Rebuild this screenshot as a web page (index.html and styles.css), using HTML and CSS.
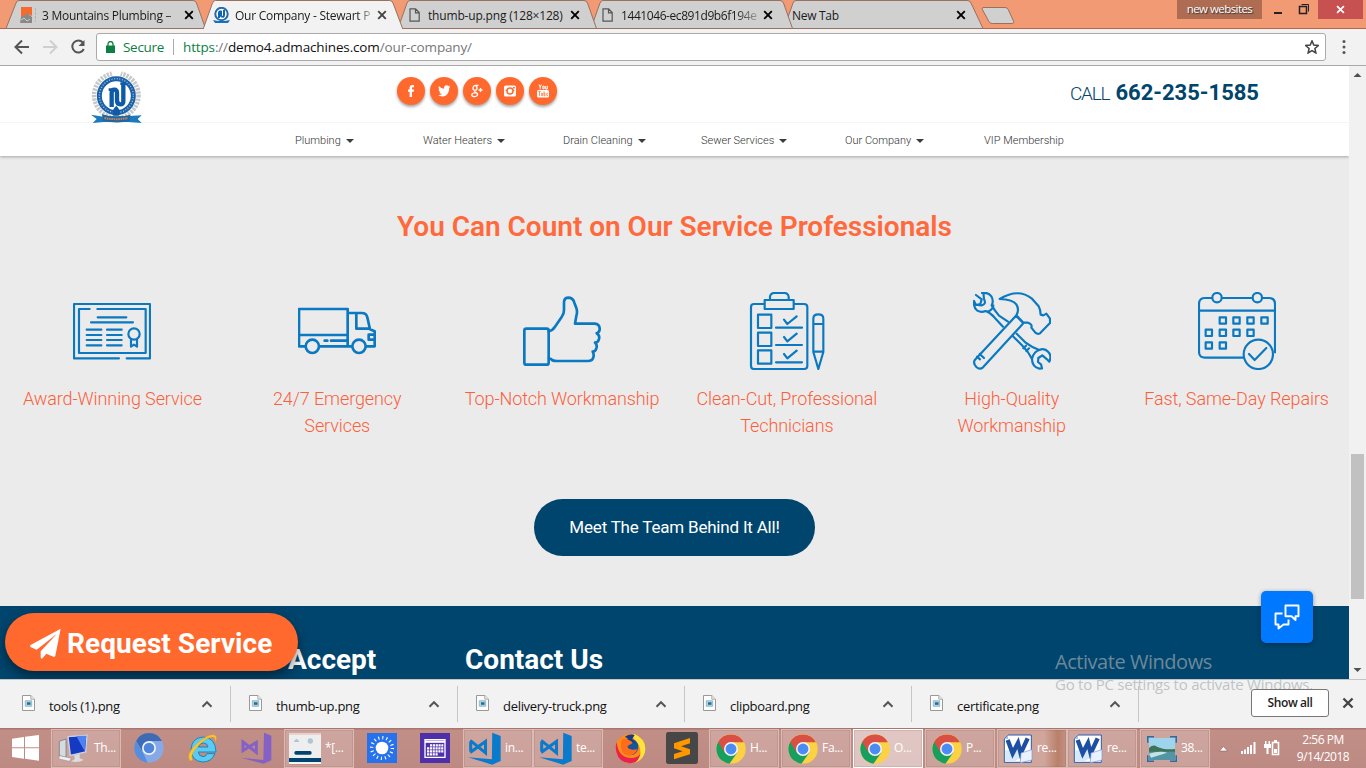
FILE: index.html
```html
<!DOCTYPE html>
<html lang="en">
<head>
<meta charset="utf-8">
<title>Our Company - Stewart Plumbing</title>
<link rel="stylesheet" href="styles.css">
</head>
<body>
<svg class="defs" width="0" height="0">
  <defs>
    <symbol id="x" viewBox="0 0 10 10"><path d="M1.2 1.2 8.8 8.8M8.8 1.2 1.2 8.8" fill="none" stroke="currentColor" stroke-width="1.9"/></symbol>
    <symbol id="page" viewBox="0 0 11 14"><path d="M1 .8h5.6L10.200 4.500v8.700H1zM6.500 .8v4h3.700" fill="none" stroke="#555" stroke-width="1.200"/></symbol>
    <symbol id="file" viewBox="0 0 13 16"><path d="M.5.5h8.300l3.700 3.700v11.300H.5z" fill="#fdfdfd" stroke="#999"/><path d="M8.800.5v3.700h3.700" fill="#eee" stroke="#999" stroke-width=".8"/><path d="M3.300 5.700h6.400v5.600H3.300z" fill="#a9d4ea" stroke="#84aabb" stroke-width=".7"/><path d="M5 7.300h3.500v2.500H5z" fill="#276c8b"/></symbol>
    <symbol id="up" viewBox="0 0 12 8"><path d="M1.500 6.800 6 2.200l4.500 4.600" fill="none" stroke="#555" stroke-width="2"/></symbol>
    <symbol id="chrome" viewBox="0 0 48 48"><circle cx="24" cy="24" r="23.500" fill="#fdd144"/><path d="M24 24 3.600 12.300A23.500 23.500 0 0 0 21.500 47.400L34.200 29.500z" fill="#17a05d"/><path d="M3.600 12.300A23.500 23.500 0 0 1 44.600 13H24L13.800 30z" fill="#d94f43"/><circle cx="24" cy="24" r="11.200" fill="#f4f4f4"/><circle cx="24" cy="24" r="8.700" fill="#4b8bf4"/></symbol>
    <symbol id="vscode" viewBox="0 0 98 98"><path d="M72 2 97 12v74L72 97 0 75l71 6z" fill="#0a7acc"/><path d="m10 28 42 34V28L10 58 8 55V31z" fill="none" stroke="#0a7acc" stroke-width="9"/></symbol>
    <symbol id="word" viewBox="0 0 90 90"><path d="M15 3h70v82H4V15z" fill="#fff" stroke="#2c5cae" stroke-width="3"/><path d="M4 15 15 3v12z" fill="#9ec3ec"/><path d="M7 49h50v20L30 84H7z" fill="#d6e8fa"/><path d="m14 18 15 40 16-31 8 31 21-45" fill="none" stroke="#1d4fa2" stroke-width="13"/><path d="m54 57 33-10v31l-35 8z" fill="#eaf2ff" stroke="#7599d6" stroke-width="2"/></symbol>
  </defs>
</svg>

<div class="screen">
  <header class="tabstrip">
    <svg class="tabshapes" width="1366" height="29" viewBox="0 0 1366 29">
      <rect width="1366" height="29" fill="#f19a74"/>
      <path d="M0 28.500h1366" stroke="#b3664b"/>
      <g fill="#d0d0d0" stroke="#98715f">
        <path d="M784 28.500 793 3q1-2.500 3-2.500h171q3 0 4 2.500l12 25.500z"/>
        <path d="M591 28.500 600 3q1-2.500 3-2.500h177q2.500 0 3.500 2.500l9 25.500z"/>
        <path d="M398 28.500 407 3q1-2.500 3-2.500h174q2.500 0 3.500 2.500l9 25.500z"/>
        <path d="M6 28.500 16 3q1-2.500 3-2.500h174q2.500 0 3.500 2.500l9 25.500z"/>
        <path d="M983 7.500h22q2.500 0 3.200 2l5.500 12q.8 2-1.500 2h-20q-2.500 0-3.300-2l-6.500-12q-.6-2 .6-2z"/>
      </g>
      <path d="M203 29.500 212.500 3q1-2.500 3-2.500h174q2.500 0 3.500 2.500L403 29.500z" fill="#f2f2f2" stroke="#98715f"/>
    </svg>
    <div class="tabs">
      <div class="tab">
        <svg width="16" height="16" viewBox="0 0 16 16"><path d="M1 0h11v9L8 7 1 11z" fill="#f8692c"/><path d="m0 16 1-6 4-2 2-2 5 4v6z" fill="#888"/><path d="m1 13 3-2 3 3 3-2" fill="none" stroke="#ccc"/><path d="M15.500 1v14" stroke="#b5b5b5" stroke-dasharray="3 1"/></svg>
        <span class="tabname">3 Mountains Plumbing –</span><svg class="tx" width="10" height="10"><use href="#x"/></svg>
      </div>
      <div class="tab active">
        <svg width="17" height="17" viewBox="0 0 17 17"><circle cx="8.500" cy="7" r="6.200" fill="#fff" stroke="#2369ad" stroke-width="2"/><path d="M6 11V6q0-2 2-1.500V9q3 2 3-1V3" fill="none" stroke="#1265ad" stroke-width="2"/><path d="m0 13 5 1h7l5-1-2 3H2z" fill="#1773b9"/></svg>
        <span class="tabname">Our Company - Stewart P</span><svg class="tx soft" width="10" height="10"><use href="#x"/></svg>
      </div>
      <div class="tab">
        <svg width="11" height="14"><use href="#page"/></svg>
        <span class="tabname">thumb-up.png (128×128)</span><svg class="tx" width="10" height="10"><use href="#x"/></svg>
      </div>
      <div class="tab">
        <svg width="11" height="14"><use href="#page"/></svg>
        <span class="tabname fade">1441046-ec891d9b6f194e</span><svg class="tx" width="10" height="10"><use href="#x"/></svg>
      </div>
      <div class="tab last"><span class="tabname">New Tab</span><svg class="tx" width="10" height="10"><use href="#x"/></svg></div>
    </div>
    <div class="winctl">
      <span class="profile">new websites</span>
      <svg width="54" height="20" viewBox="0 0 54 20"><path d="M10 13h8" stroke="#222" stroke-width="2"/><path d="M35.500 6.500h7v7h-7z" fill="none" stroke="#222" stroke-width="1.500"/><path d="M37.500 4.500h7v7" fill="none" stroke="#222"/></svg>
      <span class="winclose"><svg width="9" height="9"><use href="#x"/></svg></span>
    </div>
  </header>

  <div class="toolbar">
    <svg class="navicons" width="74" height="20" viewBox="0 0 74 20" fill="none" stroke-width="2"><path d="M17 10H4M10 3.500 3.500 10l6.500 6.500" stroke="#555"/><path d="M31 10h13M38 3.500l6.500 6.500-6.500 6.500" stroke="#cfcfcf"/><path d="M70.800 5.500a6 6 0 1 0 1 6.500" stroke="#555"/><path d="M72.500 3v6h-6z" fill="#555" stroke="none"/></svg>
    <div class="omnibox">
      <svg width="9" height="12" viewBox="0 0 9 12"><path d="M0 4.500h9V12H0z" fill="#0b8043"/><path d="M2 5V3a2.500 2.500 0 0 1 5 0v2" fill="none" stroke="#0b8043" stroke-width="1.300"/></svg>
      <span class="secure">Secure</span>
      <span class="url"><span class="green">https</span>://<span class="host">demo4.admachines.com</span>/our-company/</span>
      <svg class="star" width="14" height="14" viewBox="0 0 14 14"><path d="m7 .9 1.800 4.200 4.500.4-3.400 3 1 4.500L7 10.600 3.100 13l1-4.500-3.400-3 4.500-.4z" fill="none" stroke="#444" stroke-width="1.500"/></svg>
    </div>
    <svg class="kebab" width="4" height="16" viewBox="0 0 4 16" fill="#555"><circle cx="2" cy="2.500" r="1.500"/><circle cx="2" cy="8" r="1.500"/><circle cx="2" cy="13.500" r="1.500"/></svg>
  </div>

  <div class="viewport">
    <div class="site">
      <div class="sitehead">
        <div class="brandrow">
          <svg class="logo" width="51" height="53" viewBox="0 0 153 159">
            <circle cx="76" cy="73" r="66" fill="none" stroke="#c6c9cc" stroke-width="15" stroke-dasharray="7 3"/>
            <path d="M60 0h32l-6 18H66z" fill="#fff"/>
            <circle cx="76" cy="74" r="60" fill="#fff"/>
            <circle cx="76" cy="74" r="51" fill="#fff" stroke="#1b61a8" stroke-width="15"/>
            <circle cx="76" cy="74" r="51" fill="none" stroke="#a9c7e3" stroke-width="4" stroke-dasharray="3 5"/>
            <path d="M62 108V66q0-10 8-10t8 10v22q0 12 10 12t9-12V38" fill="none" stroke="#0e5aa7" stroke-width="13"/>
            <path d="M53 56h16M88 38h17" stroke="#0e5aa7" stroke-width="8"/>
            <path d="M76 104q18 18 7 30H67q-9-14 9-30z" fill="#1259a5"/>
            <path d="m0 131 37 6 78-2 37-2-12 11 12 12-40-3H37l-32 3 12-12z" fill="#1a79bf"/>
            <path d="M33 130q42 13 85 1l-2 19q-40 9-80-1z" fill="#23659c"/>
            <path d="M40 141q35 7 71 0" fill="none" stroke="#b98560" stroke-width="6" stroke-dasharray="5 2"/>
          </svg>
          <div class="social">
            <span><svg width="14" height="14" viewBox="0 0 14 14"><path d="M5.600 13V7.800H4V5.500h1.600V4q0-3 2.800-3H10v2.300H8.800q-.8 0-.8.800v1.400h2l-.3 2.300H8V13z" fill="#fff"/></svg></span>
            <span><svg width="14" height="14" viewBox="0 0 14 14"><path d="M1 11q2.500.2 4-1-2-.1-2.600-1.900h1.200Q1.500 7.400 1.500 5.200l1.200.4Q.9 4.200 1.900 2q2.200 2.700 5.200 2.800-.4-3.300 2.400-3.500 1.200 0 2 .8l1.500-.6-.9 1.600 1.300-.3-1.200 1.300Q12.200 9.200 9 11.400 5 13.700 1 11z" fill="#fff"/></svg></span>
            <span><svg width="14" height="14" viewBox="0 0 14 14" fill="none" stroke="#fff" stroke-width="1.300"><ellipse cx="5" cy="4" rx="2" ry="2.400"/><path d="M8.500 1.300H5M5 6.600q-.8 1.200 1.100 2 2 1 1.200 2.800-1.200 1.500-3.800 1.100-2.300-.6-1.500-2.400Q2.800 8.700 6 8.600"/><path d="M8.500 6h4M10.500 4v4"/></svg></span>
            <span><svg width="14" height="14" viewBox="0 0 14 14"><rect x="1" y="1.500" width="12" height="11" rx="1.500" fill="#fff"/><circle cx="7" cy="7" r="3" fill="#fff" stroke="#ff692e" stroke-width="1.500"/><path d="M10 3h1.800v1.600H10zM2.300 5.700H4v1H2.300zM10 5.700h1.700v1H10z" fill="#ff692e"/></svg></span>
            <span><svg width="14" height="14" viewBox="0 0 14 14"><rect x="1" y="6" width="12" height="7.500" rx="1.500" fill="#fff"/><path d="m3 .5 1.200 2.700V5.300m1.200-4.800L4.200 3.200M6.800 2.200v2.600h1.400V2.200zM9.700 2v3h1.600V1.700" fill="none" stroke="#fff"/><path d="M2.300 7.500h2.400M3.500 7.500v4.600M5.600 8.800V11.600h1V8.800M8 7.300v4.500h1V9.300H8M12 9.300h-1.200v2.300H12" fill="none" stroke="#ff692e" stroke-width=".7"/></svg></span>
          </div>
          <div class="phone"><span class="call">CALL</span><b>662-235-1585</b></div>
        </div>
        <nav class="menu">
          <a class="m1">Plumbing<i></i></a><a class="m2">Water Heaters<i></i></a><a class="m3">Drain Cleaning<i></i></a><a class="m4">Sewer Services<i></i></a><a class="m5">Our Company<i></i></a><a class="m6">VIP Membership</a>
        </nav>
      </div>

      <main class="promise">
        <h2>You Can Count on Our Service Professionals</h2>
        <div class="features">
          <div class="feature">
            <svg class="ficon" viewBox="219 36 234 234"><path d="M357 235H222V72h228v163h-70M269 87h-32v132h200V87H292M293 112h86M273 127h126M260 149h44M260 165h44M260 180h44M260 196h44M321 149h44M321 165h44M321 180h44M321 196h44M393 177v23l9-6 9 6v-23"/><circle cx="402" cy="162" r="17"/></svg>
            <p>Award-Winning Service</p>
          </div>
          <div class="feature">
            <svg class="ficon thick" viewBox="894 36 234 234"><path d="M915 199h-18V87h146v112M897 165h146M1043 99h42q14 0 17 13l8 36 14 6v45h-25M960 199h95M1069 99v47h40M1124 164h-18v15h18M974 182h8M993 182h45"/><circle cx="937" cy="199" r="20"/><circle cx="1077" cy="199" r="20"/></svg>
            <p>24/7 Emergency<br>Services</p>
          </div>
          <div class="feature">
            <svg class="ficon thick" viewBox="219 36 234 234"><rect x="223" y="146" width="73" height="108" rx="6"/><path d="M296 154q13-3 19-14l20-29q7-9 7-21V68q0-14 12-15 15 0 19 15l6 16q4 10 0 24l-4 23h59q14 1 15 14 1 11-9 15 10 6 7 17-2 11-12 11 8 8 4 17-2 10-11 10 5 9 2 17-3 11-16 11H320q-12 0-16-5l-7-3"/></svg>
            <p>Top-Notch Workmanship</p>
          </div>
          <div class="feature">
            <svg class="ficon" viewBox="894 36 234 234"><path d="M943 72h-31q-9 0-9 9v176q0 10 9 10h150q10 0 10-10V81q0-9-10-9h-31M944 60h87v27h-87zM960 60V50q2-11 13-11h30q11 0 13 11v10M978 143h78M978 195h78M978 247h78M1002 119l10 13 28-23M1002 171l10 13 28-23M1002 222l10 13 28-23M1090 116q0-13 15-13t15 13v100l-15 51-15-51zM1090 132h30M1090 215h30"/><rect x="924" y="104" width="40" height="40"/><rect x="924" y="158" width="40" height="40"/><rect x="924" y="211" width="40" height="40"/></svg>
            <p>Clean-Cut, Professional<br>Technicians</p>
          </div>
          <div class="feature">
            <svg class="ficon" viewBox="219 36 234 234"><path d="m225 239 123-132 22 23-121 132q-10 8-20-1-11-11-4-22zM231 230l9 8M239 222l13 12M299 57q56-34 97-1l20 23q5 9 6 25l8 2 9-5 11 15v13l-30 31q-7 4-14-2l-12-15q4-10-10-15l-15-1-20-21q10-17 0-33-10-14-50-16z"/><path d="m228 45 17 13-4 14-13 3-6-12q-2 20 10 29 12 7 25 1 15 5 27 20l25 27M250 38l2 19q8 16-7 19l-17-2M246 39q19-3 28 10 8 14 1 27 10 17 22 31l27 18M262 95q15-4 18-18M338 168l28 28q20 20 30 41 0 23 22 29l8-1-3-12-9-7 1-12 12-8 14 12 7 7q8-18-3-29-12-14-27-6-23-8-41-22l-27-27M370 205l8-8M379 213l8-8M396 236q5-21 22-26"/></svg>
            <p>High-Quality<br>Workmanship</p>
          </div>
          <div class="feature">
            <svg class="ficon" viewBox="894 36 234 234"><path d="M935 54h-20q-18 0-18 18v143q0 18 18 18h115M967 54h88M1087 54h20q18 0 18 18v145M897 92h228M1047 222l17 18 35-36"/><circle cx="951" cy="53" r="14"/><circle cx="1072" cy="53" r="14"/><circle cx="1075" cy="223" r="44"/><path d="M959 112h19v19h-19zM1000 112h19v19h-19zM1042 112h19v19h-19zM1084 112h19v19h-19zM917 149h19v19h-19zM959 149h19v19h-19zM1000 149h19v19h-19zM1042 149h19v19h-19zM917 187h19v19h-19zM959 187h19v19h-19z"/></svg>
            <p>Fast, Same-Day Repairs</p>
          </div>
        </div>
        <a class="teambtn">Meet The Team Behind It All!</a>
      </main>

      <footer class="sitefoot"><h3>Accept</h3><h3>Contact Us</h3></footer>

      <a class="request"><svg width="31" height="31" viewBox="0 0 93 93"><path d="M92 2 76 83q-1 5-6 3L49 77 38 90q-6 5-6-4V70l49-53L20 65 3 58q-6-4 0-8z" fill="#fff"/></svg><span>Request Service</span></a>
      <a class="chat"><svg width="26" height="26" viewBox="0 0 26 26" fill="none" stroke="#fff" stroke-width="1.900" stroke-linejoin="round"><path d="M11.500 1.500h13v10.700h-3V16l-4-3.800h-6z"/><path d="M8.500 9.500h-7v11h3v4l5-4h5v-5"/></svg></a>
    </div>
    <div class="scrollbar">
      <svg width="17" height="17" viewBox="0 0 17 17"><path d="m4.500 11 4-4 4 4z" fill="#505050"/></svg>
      <div class="thumb"></div>
      <svg width="17" height="17" viewBox="0 0 17 17"><path d="m4.500 6 4 4 4-4z" fill="#505050"/></svg>
    </div>
  </div>

  <div class="shelf">
    <div class="dl"><svg class="fi" width="13" height="16"><use href="#file"/></svg><span>tools (1).png</span><svg class="up" width="12" height="8"><use href="#up"/></svg></div>
    <div class="dl"><svg class="fi" width="13" height="16"><use href="#file"/></svg><span>thumb-up.png</span><svg class="up" width="12" height="8"><use href="#up"/></svg></div>
    <div class="dl"><svg class="fi" width="13" height="16"><use href="#file"/></svg><span>delivery-truck.png</span><svg class="up" width="12" height="8"><use href="#up"/></svg></div>
    <div class="dl"><svg class="fi" width="13" height="16"><use href="#file"/></svg><span>clipboard.png</span><svg class="up" width="12" height="8"><use href="#up"/></svg></div>
    <div class="dl"><svg class="fi" width="13" height="16"><use href="#file"/></svg><span>certificate.png</span><svg class="up" width="12" height="8"><use href="#up"/></svg></div>
    <div class="shelfend"><span class="showall">Show all</span><svg width="12" height="12"><use href="#x"/></svg></div>
  </div>

  <div class="taskbar">
    <svg class="start" width="27" height="26" viewBox="0 0 81 78" fill="#fff"><path d="m0 11 36-5v31H0zM39 5l42-5v37H39zM0 40h36v31L0 66zM39 40h42v37l-42-6z"/></svg>
    <div class="task"><svg width="32" height="30" viewBox="0 0 96 90"><path d="M4 22 24 15v55L4 65z" fill="#d5dce0" stroke="#657078" stroke-width="2"/><path d="m30 8 57-4-4 50-46 10z" fill="#1639c4" stroke="#ccd3df" stroke-width="4"/><path d="m55 6 30-1-5 47z" fill="#4d82f0"/><path d="m49 64 16-4v13l12 5q-16 9-38 4l11-6z" fill="#d9dddf"/><path d="m5 65 35 8-6 9-32-8z" fill="#eef0f1" stroke="#777"/></svg><span>Th...</span></div>
    <svg class="ti chromium" width="30" height="30" viewBox="0 0 90 90"><circle cx="45" cy="45" r="44" fill="#86aae7"/><path d="M6 24A44 44 0 0 1 84 24H45L25 55z" fill="#3f6ab4"/><path d="M6 24 25 55 41 89A44 44 0 0 1 6 24z" fill="#588cdd"/><circle cx="45" cy="45" r="21" fill="#eef4ff"/><circle cx="45" cy="45" r="16" fill="#4f86db"/></svg>
    <svg class="ti ie" width="31" height="31" viewBox="0 0 93 93"><path d="M84 62q-10 25-37 25-33-2-35-37 2-36 37-38 37 2 38 45H34q1 13 14 14 9 0 12-9zM34 42h29q-2-12-14-12t-15 12z" fill="#5ccbf3" stroke="#1687bd" stroke-width="3"/><path d="M10 84q-17-18 21-53Q65 2 82 6q11 3 3 22 0-16-8-16Q58 13 34 38 8 65 17 81z" fill="#ffc52b" stroke="#d89b14"/></svg>
    <svg class="ti vs" width="32" height="32" viewBox="0 0 96 96"><path d="m72 2 22 9v74L71 95 2 77l68 7z" fill="#8661c5"/><path d="m9 30 40 31V31L9 56z" fill="none" stroke="#8661c5" stroke-width="9"/></svg>
    <div class="task shot"><svg width="32" height="32" viewBox="0 0 96 96"><path fill="#eee" d="M0 0h96v96H0z"/><rect x="16" y="54" width="52" height="11" rx="5" fill="#00456d"/><path fill="#00456d" d="M0 75h96v12H0z"/><path d="M0 88h96v6H0z" fill="#f5f5f5"/><path d="M0 93h96v3H0z" fill="#d18a84"/><circle cx="64" cy="24" r="8" fill="#adc5d4"/><path d="M14 27q10-18 17 0z" fill="#adc5d4"/><path d="M0 3h96" stroke="#e4b6ac" stroke-width="3"/></svg><span>*[...</span></div>
    <svg class="ti weather" width="30" height="30" viewBox="0 0 90 90"><path fill="#2672ec" d="M0 0h90v90H0z"/><circle cx="45" cy="45" r="19" fill="#fff"/><circle cx="45" cy="45" r="31" fill="none" stroke="#fff" stroke-width="10" stroke-dasharray="3.200 8.973"/></svg>
    <svg class="ti calendar" width="30" height="30" viewBox="0 0 90 90"><path fill="#4e30aa" d="M0 0h90v90H0z"/><path d="M15 20h60v53H15z" fill="none" stroke="#fff" stroke-width="4"/><path d="M15 26h60" stroke="#fff" stroke-width="7"/><path d="M30 37h40M21 46h49M21 55h49M21 64h33" stroke="#fff" stroke-width="7" stroke-dasharray="6.500 2"/></svg>
    <div class="task code1"><svg width="33" height="33"><use href="#vscode"/></svg><span>in...</span></div>
    <div class="task code2"><svg width="33" height="33"><use href="#vscode"/></svg><span>te...</span></div>
    <svg class="ti firefox" width="31" height="31" viewBox="0 0 93 93"><circle cx="46" cy="47" r="44" fill="#ff8a16"/><path d="M5 28q5 50 49 47 20-3 26-19-3 31-34 35Q12 90 4 57 0 40 5 28z" fill="#e9214f"/><path d="M57 2q34 14 34 45 0 30-30 42 20-19 14-42-4-18-18-29-6-10 0-16z" fill="#ffe23a"/><circle cx="45" cy="42" r="25" fill="#15559b"/><path d="M19 21q14-8 23 1 11 1 10 9l-13 7q-4 5 5 10 11 5 23 0-7 20-27 19Q15 62 19 21z" fill="#ff6c1a"/><path d="M30 11q15-10 29-5l-8 13 12 13-11-5z" fill="#123c85"/></svg>
    <svg class="ti sublime" width="32" height="32" viewBox="0 0 96 96"><rect width="96" height="96" rx="7" fill="#474747"/><path d="m24 34 48-16v16l-27 9 27 9v15L24 82V66l26-8-26-9z" fill="#ff9800"/></svg>
    <div class="task c1"><svg width="30" height="30"><use href="#chrome"/></svg><span>H...</span></div>
    <div class="task c2"><svg width="30" height="30"><use href="#chrome"/></svg><span>Fa...</span></div>
    <div class="task c2 on"><svg width="30" height="30"><use href="#chrome"/></svg><span>O...</span></div>
    <div class="task c2"><svg width="30" height="30"><use href="#chrome"/></svg><span>P...</span></div>
    <div class="task c2 w1"><svg width="30" height="30"><use href="#word"/></svg><span>re...</span></div>
    <div class="task w2"><svg width="30" height="30"><use href="#word"/></svg><span>re...</span></div>
    <div class="task c2 photo"><svg width="30" height="26" viewBox="0 0 90 78"><path d="M6 6h78v66H6z" fill="#9fd4ed"/><path d="M6 36q13-12 24-4 20 10 54 7v17H6z" fill="#3d7358"/><path d="M6 47h78v25H6z" fill="#5395a5"/><path d="M6 53q30-9 55-3L12 65z" fill="#c3e5e5"/><path d="M2 20V2h19M69 2h19v18M88 58v18H69M21 76H2V58" fill="none" stroke="#266eaa" stroke-width="5"/></svg><span>38...</span></div>
    <svg class="tray" width="66" height="20" viewBox="0 0 66 20"><path d="m3.500 13 4-4.500 4 4.500z" fill="#fff" stroke="#8b625b" stroke-width=".6"/><path d="M26 16v-3M29 16v-4.500M32 16v-7M35 16V7M38.500 16V4" stroke="#fff" stroke-width="2"/><path d="M56.500 4.500h6v12h-6z" fill="none" stroke="#fff" stroke-width="1.600"/><path d="M58 11h3v4h-3zM58 2h3v2h-3zM48 6h7v4h-2.500v6h-2v-6H48zM49 3h1.500v3H49zM52.500 3H54v3h-1.500z" fill="#fff"/></svg>
    <div class="clock"><span>2:56 PM</span><span>9/14/2018</span></div>
  </div>

  <div class="watermark"><span class="wm1">Activate Windows</span><span class="wm2">Go to PC settings to activate Windows.</span></div>
</div>
</body>
</html>
```
FILE: styles.css
```css
* { box-sizing: border-box; }
body { margin: 0; overflow: hidden; font-family: "Open Sans", "Noto Sans", sans-serif; color: #222; }
svg { display: block; flex: none; }
.defs { position: absolute; }
.screen { position: relative; width: 1366px; height: 768px; display: flex; flex-direction: column; overflow: hidden; background: #ebebeb; }

/* browser tabs */
.tabstrip { position: relative; height: 29px; flex: none; display: flex; justify-content: space-between; font-size: 12px; }
.tabshapes { position: absolute; left: 0; top: 0; }
.tabs { position: relative; display: flex; height: 29px; padding-left: 20px; }
.tab { width: 193px; display: flex; align-items: center; padding: 1px 20px 0 0; color: #1b1b1b; }
.tabname { margin-left: 6px; flex: 1; white-space: nowrap; overflow: hidden; letter-spacing: -.26px; }
.tab:first-child .tabname { -webkit-mask-image: linear-gradient(90deg, #000 86%, #0006); mask-image: linear-gradient(90deg, #000 86%, #0006); }
.active .tabname { margin-left: 5px; -webkit-mask-image: linear-gradient(90deg, #000 86%, #0003 97%); mask-image: linear-gradient(90deg, #000 86%, #0003 97%); }
.tab:nth-child(3) { padding-left: 3px; }
.tab:nth-child(4) { padding-left: 3px; }
.tab:nth-child(3) .tabname, .tab:nth-child(4) .tabname { margin-left: 8px; letter-spacing: -.18px; }
.tab:nth-child(4) .fade { letter-spacing: -.42px; margin-right: 2px; -webkit-mask-image: linear-gradient(90deg, #000 82%, #0002); mask-image: linear-gradient(90deg, #000 82%, #0002); }
.tab .tx { color: #000; margin-right: -1px; }
.tab .soft { color: #444; }
.last .tabname { margin-left: 0; letter-spacing: -.3px; }
.winctl { position: relative; display: flex; height: 20px; padding-right: 3px; }
.profile { width: 85px; height: 19px; line-height: 18px; background: #ae6c52; color: #fff; font-size: 11.5px; letter-spacing: -.56px; text-align: center; text-shadow: 1px 1px 1px #333; margin: 0 2px 0 -1px; }
.winclose { width: 45px; height: 19px; background: #c75050; color: #fff; display: grid; place-items: center; }

.toolbar { height: 37px; flex: none; background: #f2f2f2; border-bottom: 1px solid #a9a9a9; display: flex; align-items: center; padding-left: 12px; }
.navicons { margin-right: 10px; }
.omnibox { width: 1230px; height: 28px; background: #fff; border: 1px solid #aaa; border-radius: 3px; display: flex; align-items: center; padding: 0 6px 0 9px; font-size: 13.500px; }
.secure { color: #0b8043; margin-left: 8px; padding-right: 9px; border-right: 1px solid #aaa; line-height: 16px; letter-spacing: -.3px; width: 51px; }
.url { color: #777; margin-left: 9px; letter-spacing: -.14px; flex: 1; }
.green { color: #0b8043; }
.host { color: #111; }
.kebab { margin-left: 16px; }

/* page */
.viewport { height: 613px; flex: none; display: flex; }
.site { position: relative; width: 1349px; display: flex; flex-direction: column; overflow: hidden; font-family: Roboto, "Noto Sans", sans-serif; }
.sitehead { position: relative; height: 90px; flex: none; background: #fff; box-shadow: 0 1px 3px rgba(0,0,0,.3); }
.brandrow { display: flex; height: 57px; border-bottom: 1px solid #f5f5f5; padding: 5px 90px 0 91px; align-items: flex-start; }
.social { display: flex; gap: 5px; margin: 6px 0 0 255px; }
.social span { width: 28px; height: 28px; border-radius: 50%; background: #ff692e; box-shadow: 0 2px 3px rgba(0,0,0,.35); display: grid; place-items: center; }
.phone { margin-left: auto; display: flex; align-items: baseline; color: #00456b; font-size: 22px; line-height: 44px; }
.call { font-size: 19px; letter-spacing: -1.2px; margin-right: 6px; font-weight: 300; }
.menu { display: flex; height: 33px; align-items: center; padding: 2px 0 0 295px; font-size: 11px; color: #333; }
.menu a { display: flex; align-items: center; white-space: nowrap; }
.menu i { border: 4px solid transparent; border-top-color: #3c3c3c; border-bottom: 0; margin-left: 5px; margin-top: 1px; }
.m1 { width: 128px; } .m2 { width: 140px; } .m3 { width: 138px; } .m4 { width: 144px; } .m5 { width: 139px; }
.m1, .m2, .m3, .m4, .m5, .m6 { font-weight: 300; }
.promise { height: 450px; flex: none; background: #ebebeb; display: flex; flex-direction: column; align-items: center; padding-top: 51px; }
.promise h2 { margin: 0; color: #ff693b; font-size: 28px; font-weight: 600; line-height: 40px; letter-spacing: -.02px; }
.features { width: 1349px; display: grid; grid-template-columns: repeat(6, 1fr); margin-top: 45px; }
.feature { height: 162px; display: flex; flex-direction: column; align-items: center; }
.ficon { width: 78px; height: 78px; fill: none; stroke: #0b79c1; stroke-width: 6.500; stroke-linecap: round; stroke-linejoin: round; }
.ficon.thick { stroke-width: 8; }
.feature p { margin: 15px 0 0; text-align: center; white-space: nowrap; font-size: 18px; font-weight: 300; line-height: 27px; letter-spacing: -.1px; color: #fb5f3c; }
.teambtn { width: 281px; height: 57px; border-radius: 29px; background: #00456d; color: #fff; font-size: 17px; letter-spacing: -.2px; line-height: 57px; text-align: center; margin-top: 45px; }
.sitefoot { height: 73px; flex: none; background: #00456d; color: #fff; display: flex; padding: 34px 0 0 288px; }
.sitefoot h3 { margin: 0; font-size: 28px; line-height: 39px; font-weight: 700; width: 177px; white-space: nowrap; }
.request { position: absolute; left: 5px; top: 547px; width: 293px; height: 58px; border-radius: 29px; background: #ff692e; box-shadow: 0 5px 12px rgba(0,0,0,.45); display: flex; align-items: center; padding: 2px 0 0 25px; gap: 6px; color: #fff; font-size: 28px; font-weight: 700; letter-spacing: .05px; white-space: nowrap; }
.chat { position: absolute; left: 1261px; top: 525px; width: 52px; height: 52px; border-radius: 5px; background: #0078ff; box-shadow: 0 1px 4px rgba(0,0,0,.4); display: grid; place-items: center; }
.scrollbar { width: 17px; background: #f1f1f1; display: flex; flex-direction: column; }
.thumb { width: 13px; height: 145px; margin: 371px 0 auto 2px; background: #c1c1c1; }

/* downloads */
.shelf { height: 49px; flex: none; background: #f2f2f2; border-top: 1px solid #c4c4c4; display: flex; padding: 6px 0; font-size: 13px; color: #111; }
.dl { width: 227px; height: 36px; display: flex; align-items: center; border-right: 1px solid #c6c6c6; padding: 4px 17px 0 21px; letter-spacing: -.3px; }
.dl:first-child { width: 231px; padding-left: 22px; }
.dl:nth-child(n+2) .fi { margin-left: -3px; }
.dl .fi { margin-top: -7px; }
.dl span { margin-left: 14px; flex: 1; }
.dl .up { margin-top: -4px; }
.shelfend { margin-left: auto; display: flex; align-items: center; gap: 13px; padding-right: 12px; color: #444; }
.showall { position: relative; z-index: 2; width: 78px; height: 28px; border: 1px solid #777; border-radius: 3px; background: #fff; line-height: 25px; text-align: center; color: #222; font-size: 12px; font-weight: 600; letter-spacing: -.4px; margin-top: -2px; }
.shelfend svg { margin-top: -2px; }

/* taskbar */
.taskbar { height: 40px; flex: none; display: flex; align-items: center; background: linear-gradient(#a77670 0, #a77670 1px, #c28f87 2px, #bd8a83); color: #fff; font-size: 13px; letter-spacing: -.3px; }
.start { margin: 0 12px; }
.task { width: 70px; height: 39px; flex: none; display: flex; align-items: center; gap: 4px; padding-left: 6px; background: rgba(255,255,255,.2); border: 1px solid #dcbab4; box-shadow: inset 0 0 0 1px rgba(130,80,70,.15); white-space: nowrap; overflow: hidden; align-self: flex-end; }
.task span { margin-top: -2px; font-size: 12px; }
.chromium { margin-left: 13px; } .ie { margin-left: 23px; } .vs { margin-left: 22px; }
.shot { margin-left: 12px; padding-left: 4px; }
.weather { margin-left: 13px; } .calendar { margin-left: 23px; }
.code1 { margin-left: 13px; padding-left: 4px; } .code2 { padding-left: 5px; }
.firefox { margin-left: 12px; } .sublime { margin-left: 20px; }
.c1 { margin-left: 11px; } .c2 { margin-left: 2px; }
.on { background: rgba(255,255,255,.5); border-color: #fff; }
.w1, .w2 { padding-left: 5px; }
.w1 { background: linear-gradient(90deg, #cfa59c 68%, #b98069 88%, #c29183); }
.photo { margin-left: 3px; }
.tray { margin-left: 6px; }
.clock { flex: 1; display: flex; flex-direction: column; align-items: center; font-size: 12px; line-height: 17px; letter-spacing: -.5px; padding-right: 2px; }

.watermark { position: absolute; left: 1055px; top: 649px; display: flex; flex-direction: column; white-space: nowrap; color: rgba(165,170,175,.68); }
.wm1 { font-size: 20px; line-height: 26px; letter-spacing: -.46px; }
.wm2 { font-size: 15px; line-height: 18px; letter-spacing: -.24px; }
```
